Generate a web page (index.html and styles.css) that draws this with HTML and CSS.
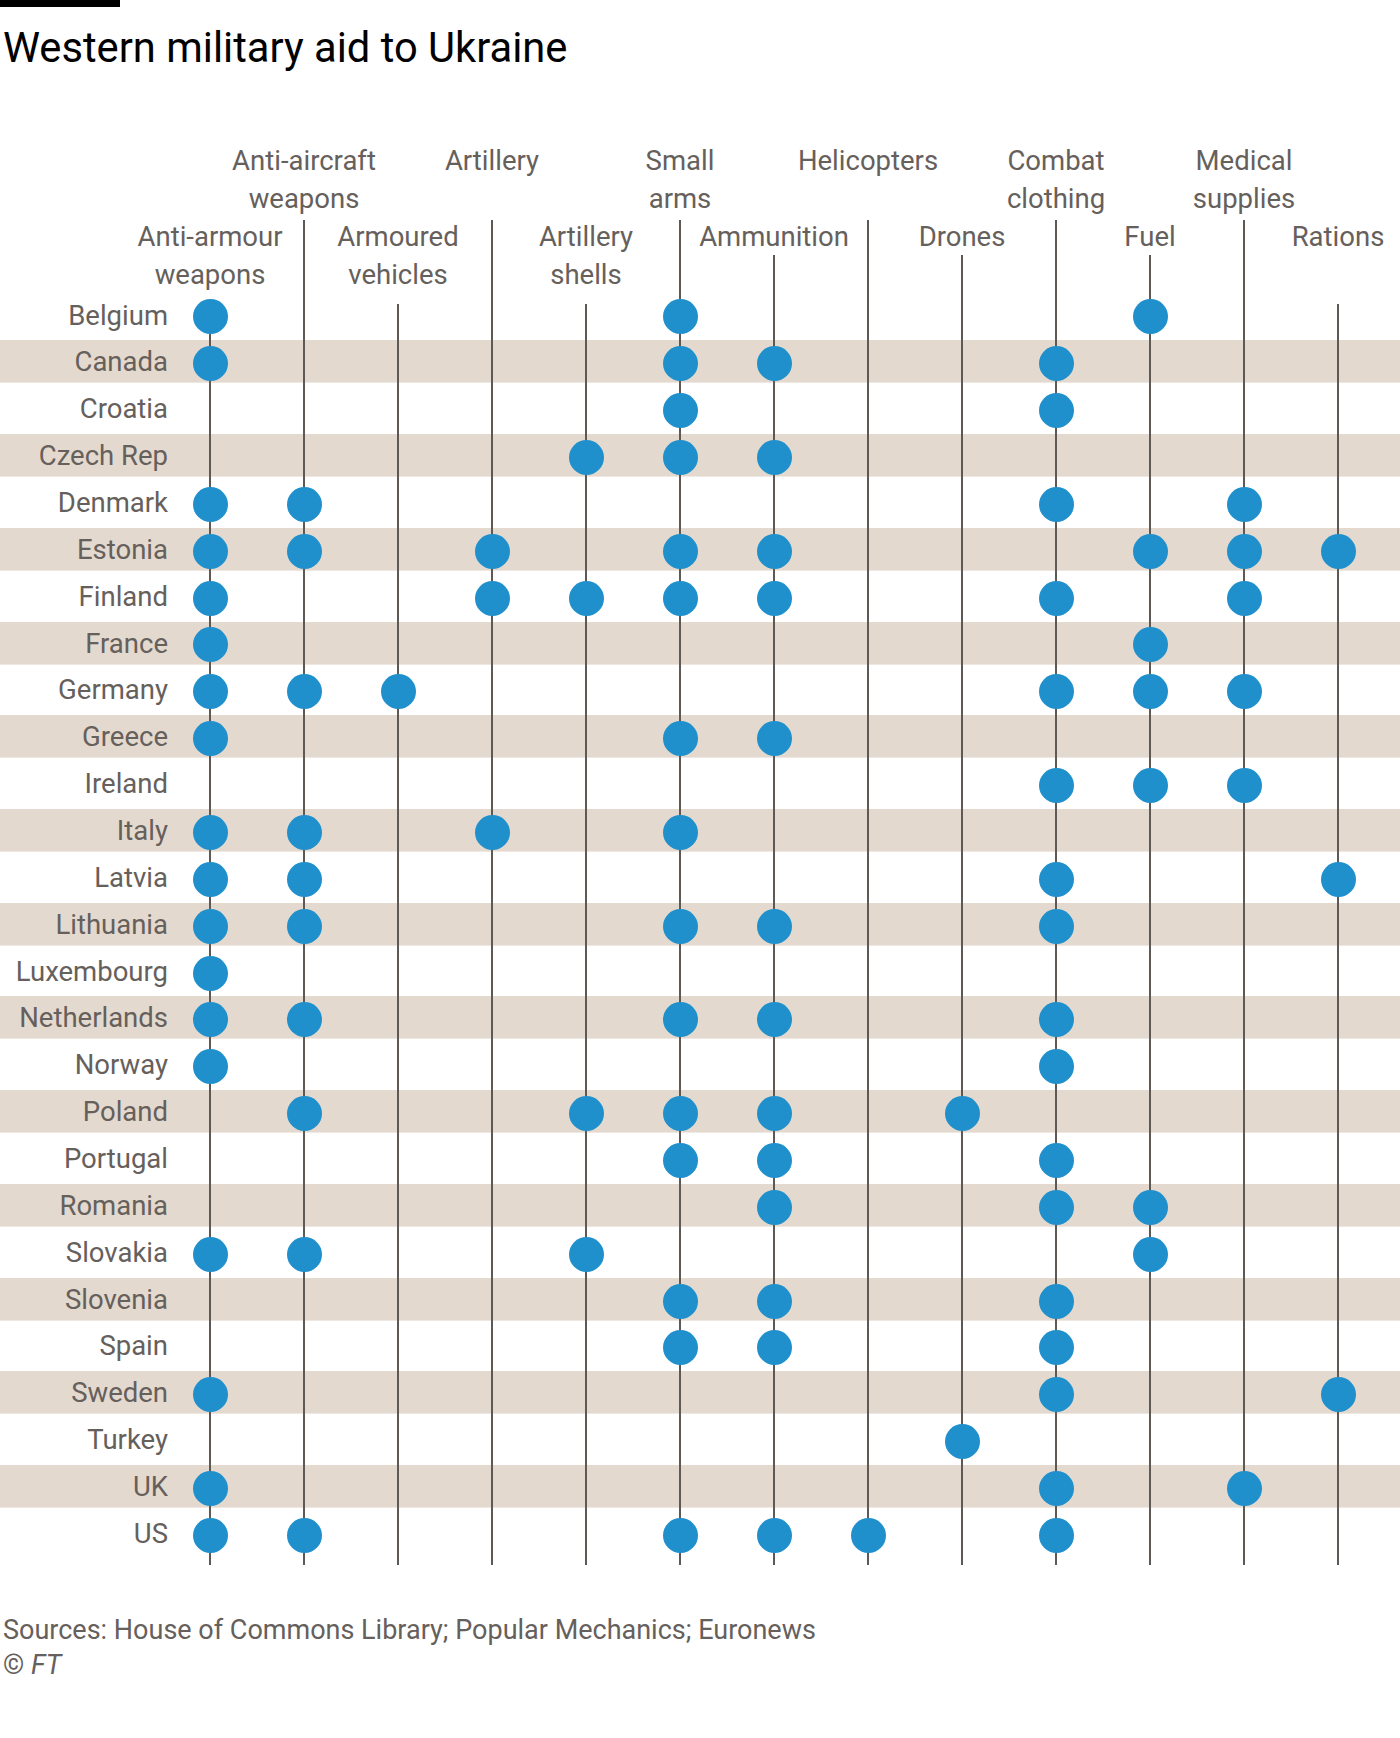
FILE: index.html
```html
<!DOCTYPE html>
<html lang="en">
<head>
<meta charset="utf-8">
<title>Western military aid to Ukraine</title>
<link rel="stylesheet" href="styles.css">
</head>
<body>
<div class="bar"></div>
<h1 class="title">Western military aid to Ukraine</h1>
<div class="chart">
  <div class="head">
    <div class="hcol low two"><div class="hlabel"><span>Anti-armour</span><span>weapons</span></div></div>
    <div class="hcol up"><div class="hlabel"><span>Anti-aircraft</span><span>weapons</span></div><div class="hline"></div></div>
    <div class="hcol low two"><div class="hlabel"><span>Armoured</span><span>vehicles</span></div></div>
    <div class="hcol up"><div class="hlabel"><span>Artillery</span><span>&nbsp;</span></div><div class="hline"></div></div>
    <div class="hcol low two"><div class="hlabel"><span>Artillery</span><span>shells</span></div></div>
    <div class="hcol up"><div class="hlabel"><span>Small</span><span>arms</span></div><div class="hline"></div></div>
    <div class="hcol low"><div class="hlabel"><span>Ammunition</span></div><div class="hline"></div></div>
    <div class="hcol up"><div class="hlabel"><span>Helicopters</span><span>&nbsp;</span></div><div class="hline"></div></div>
    <div class="hcol low"><div class="hlabel"><span>Drones</span></div><div class="hline"></div></div>
    <div class="hcol up"><div class="hlabel"><span>Combat</span><span>clothing</span></div><div class="hline"></div></div>
    <div class="hcol low"><div class="hlabel"><span>Fuel</span></div><div class="hline"></div></div>
    <div class="hcol up"><div class="hlabel"><span>Medical</span><span>supplies</span></div><div class="hline"></div></div>
    <div class="hcol low"><div class="hlabel"><span>Rations</span></div></div>
  </div>

  <div class="row"><span class="name">Belgium</span><i class="c on late"></i><i class="c"></i><i class="c late"></i><i class="c"></i><i class="c late"></i><i class="c on"></i><i class="c"></i><i class="c"></i><i class="c"></i><i class="c"></i><i class="c on"></i><i class="c"></i><i class="c late"></i></div>
  <div class="row alt"><span class="name">Canada</span><i class="c on"></i><i class="c"></i><i class="c"></i><i class="c"></i><i class="c"></i><i class="c on"></i><i class="c on"></i><i class="c"></i><i class="c"></i><i class="c on"></i><i class="c"></i><i class="c"></i><i class="c"></i></div>
  <div class="row"><span class="name">Croatia</span><i class="c"></i><i class="c"></i><i class="c"></i><i class="c"></i><i class="c"></i><i class="c on"></i><i class="c"></i><i class="c"></i><i class="c"></i><i class="c on"></i><i class="c"></i><i class="c"></i><i class="c"></i></div>
  <div class="row alt"><span class="name">Czech Rep</span><i class="c"></i><i class="c"></i><i class="c"></i><i class="c"></i><i class="c on"></i><i class="c on"></i><i class="c on"></i><i class="c"></i><i class="c"></i><i class="c"></i><i class="c"></i><i class="c"></i><i class="c"></i></div>
  <div class="row"><span class="name">Denmark</span><i class="c on"></i><i class="c on"></i><i class="c"></i><i class="c"></i><i class="c"></i><i class="c"></i><i class="c"></i><i class="c"></i><i class="c"></i><i class="c on"></i><i class="c"></i><i class="c on"></i><i class="c"></i></div>
  <div class="row alt"><span class="name">Estonia</span><i class="c on"></i><i class="c on"></i><i class="c"></i><i class="c on"></i><i class="c"></i><i class="c on"></i><i class="c on"></i><i class="c"></i><i class="c"></i><i class="c"></i><i class="c on"></i><i class="c on"></i><i class="c on"></i></div>
  <div class="row"><span class="name">Finland</span><i class="c on"></i><i class="c"></i><i class="c"></i><i class="c on"></i><i class="c on"></i><i class="c on"></i><i class="c on"></i><i class="c"></i><i class="c"></i><i class="c on"></i><i class="c"></i><i class="c on"></i><i class="c"></i></div>
  <div class="row alt"><span class="name">France</span><i class="c on"></i><i class="c"></i><i class="c"></i><i class="c"></i><i class="c"></i><i class="c"></i><i class="c"></i><i class="c"></i><i class="c"></i><i class="c"></i><i class="c on"></i><i class="c"></i><i class="c"></i></div>
  <div class="row"><span class="name">Germany</span><i class="c on"></i><i class="c on"></i><i class="c on"></i><i class="c"></i><i class="c"></i><i class="c"></i><i class="c"></i><i class="c"></i><i class="c"></i><i class="c on"></i><i class="c on"></i><i class="c on"></i><i class="c"></i></div>
  <div class="row alt"><span class="name">Greece</span><i class="c on"></i><i class="c"></i><i class="c"></i><i class="c"></i><i class="c"></i><i class="c on"></i><i class="c on"></i><i class="c"></i><i class="c"></i><i class="c"></i><i class="c"></i><i class="c"></i><i class="c"></i></div>
  <div class="row"><span class="name">Ireland</span><i class="c"></i><i class="c"></i><i class="c"></i><i class="c"></i><i class="c"></i><i class="c"></i><i class="c"></i><i class="c"></i><i class="c"></i><i class="c on"></i><i class="c on"></i><i class="c on"></i><i class="c"></i></div>
  <div class="row alt"><span class="name">Italy</span><i class="c on"></i><i class="c on"></i><i class="c"></i><i class="c on"></i><i class="c"></i><i class="c on"></i><i class="c"></i><i class="c"></i><i class="c"></i><i class="c"></i><i class="c"></i><i class="c"></i><i class="c"></i></div>
  <div class="row"><span class="name">Latvia</span><i class="c on"></i><i class="c on"></i><i class="c"></i><i class="c"></i><i class="c"></i><i class="c"></i><i class="c"></i><i class="c"></i><i class="c"></i><i class="c on"></i><i class="c"></i><i class="c"></i><i class="c on"></i></div>
  <div class="row alt"><span class="name">Lithuania</span><i class="c on"></i><i class="c on"></i><i class="c"></i><i class="c"></i><i class="c"></i><i class="c on"></i><i class="c on"></i><i class="c"></i><i class="c"></i><i class="c on"></i><i class="c"></i><i class="c"></i><i class="c"></i></div>
  <div class="row"><span class="name">Luxembourg</span><i class="c on"></i><i class="c"></i><i class="c"></i><i class="c"></i><i class="c"></i><i class="c"></i><i class="c"></i><i class="c"></i><i class="c"></i><i class="c"></i><i class="c"></i><i class="c"></i><i class="c"></i></div>
  <div class="row alt"><span class="name">Netherlands</span><i class="c on"></i><i class="c on"></i><i class="c"></i><i class="c"></i><i class="c"></i><i class="c on"></i><i class="c on"></i><i class="c"></i><i class="c"></i><i class="c on"></i><i class="c"></i><i class="c"></i><i class="c"></i></div>
  <div class="row"><span class="name">Norway</span><i class="c on"></i><i class="c"></i><i class="c"></i><i class="c"></i><i class="c"></i><i class="c"></i><i class="c"></i><i class="c"></i><i class="c"></i><i class="c on"></i><i class="c"></i><i class="c"></i><i class="c"></i></div>
  <div class="row alt"><span class="name">Poland</span><i class="c"></i><i class="c on"></i><i class="c"></i><i class="c"></i><i class="c on"></i><i class="c on"></i><i class="c on"></i><i class="c"></i><i class="c on"></i><i class="c"></i><i class="c"></i><i class="c"></i><i class="c"></i></div>
  <div class="row"><span class="name">Portugal</span><i class="c"></i><i class="c"></i><i class="c"></i><i class="c"></i><i class="c"></i><i class="c on"></i><i class="c on"></i><i class="c"></i><i class="c"></i><i class="c on"></i><i class="c"></i><i class="c"></i><i class="c"></i></div>
  <div class="row alt"><span class="name">Romania</span><i class="c"></i><i class="c"></i><i class="c"></i><i class="c"></i><i class="c"></i><i class="c"></i><i class="c on"></i><i class="c"></i><i class="c"></i><i class="c on"></i><i class="c on"></i><i class="c"></i><i class="c"></i></div>
  <div class="row"><span class="name">Slovakia</span><i class="c on"></i><i class="c on"></i><i class="c"></i><i class="c"></i><i class="c on"></i><i class="c"></i><i class="c"></i><i class="c"></i><i class="c"></i><i class="c"></i><i class="c on"></i><i class="c"></i><i class="c"></i></div>
  <div class="row alt"><span class="name">Slovenia</span><i class="c"></i><i class="c"></i><i class="c"></i><i class="c"></i><i class="c"></i><i class="c on"></i><i class="c on"></i><i class="c"></i><i class="c"></i><i class="c on"></i><i class="c"></i><i class="c"></i><i class="c"></i></div>
  <div class="row"><span class="name">Spain</span><i class="c"></i><i class="c"></i><i class="c"></i><i class="c"></i><i class="c"></i><i class="c on"></i><i class="c on"></i><i class="c"></i><i class="c"></i><i class="c on"></i><i class="c"></i><i class="c"></i><i class="c"></i></div>
  <div class="row alt"><span class="name">Sweden</span><i class="c on"></i><i class="c"></i><i class="c"></i><i class="c"></i><i class="c"></i><i class="c"></i><i class="c"></i><i class="c"></i><i class="c"></i><i class="c on"></i><i class="c"></i><i class="c"></i><i class="c on"></i></div>
  <div class="row"><span class="name">Turkey</span><i class="c"></i><i class="c"></i><i class="c"></i><i class="c"></i><i class="c"></i><i class="c"></i><i class="c"></i><i class="c"></i><i class="c on"></i><i class="c"></i><i class="c"></i><i class="c"></i><i class="c"></i></div>
  <div class="row alt"><span class="name">UK</span><i class="c on"></i><i class="c"></i><i class="c"></i><i class="c"></i><i class="c"></i><i class="c"></i><i class="c"></i><i class="c"></i><i class="c"></i><i class="c on"></i><i class="c"></i><i class="c on"></i><i class="c"></i></div>
  <div class="row"><span class="name">US</span><i class="c on"></i><i class="c on"></i><i class="c"></i><i class="c"></i><i class="c"></i><i class="c on"></i><i class="c on"></i><i class="c on"></i><i class="c"></i><i class="c on"></i><i class="c"></i><i class="c"></i><i class="c"></i></div>

  <div class="tail"><i class="c"></i><i class="c"></i><i class="c"></i><i class="c"></i><i class="c"></i><i class="c"></i><i class="c"></i><i class="c"></i><i class="c"></i><i class="c"></i><i class="c"></i><i class="c"></i><i class="c"></i></div>
</div>
<div class="source">
  <p class="source-line">Sources: House of Commons Library; Popular Mechanics; Euronews</p>
  <p class="source-line">© <em class="ft">FT</em></p>
</div>
</body>
</html>
```
FILE: styles.css
```css
* { box-sizing: border-box; }

body {
  margin: 0;
  background: #ffffff;
  color: #66605c;
  font-family: Roboto, "Liberation Sans", sans-serif;
}

.bar {
  width: 120px;
  height: 7px;
  background: #000000;
}

.title {
  margin: 16.2px 0 0 3px;
  font-size: 41.7px;
  line-height: 50px;
  font-weight: 400;
  color: #000000;
}

.chart {
  margin-top: 68.9px;
}

.head {
  display: flex;
  height: 151.5px;
  padding-left: 163px;
}

.hcol {
  flex: 0 0 94px;
  width: 94px;
  min-width: 0;
  display: flex;
  flex-direction: column;
  align-items: center;
}

.hlabel {
  display: flex;
  flex-direction: column;
  align-items: center;
  font-size: 27.5px;
  line-height: 38px;
  white-space: nowrap;
}

.low .hlabel {
  margin-top: 76px;
}

.hline {
  flex: 1;
  width: 2px;
  margin-top: 1.9px;
  background: #5f5955;
}

.low .hline {
  margin-top: -1.1px;
}

.row {
  display: flex;
  height: 46.87px;
}

.row.alt {
  background: linear-gradient(#e4d9ce, #e4d9ce) 0 0 / 100% 42.6px no-repeat;
}

.name {
  flex: 0 0 168px;
  margin-right: -5px;
  text-align: right;
  font-size: 27.5px;
  line-height: 43px;
  white-space: nowrap;
}

.c {
  flex: 0 0 94px;
  min-width: 0;
  display: flex;
  justify-content: center;
  align-items: flex-start;
  background: linear-gradient(#5f5955, #5f5955) 50% 0 / 2px 100% no-repeat;
}

.c.late {
  background-position: 50% 100%;
  background-size: 2px calc(100% - 9.4px);
}

.c.on::after {
  content: "";
  flex: 0 0 35px;
  width: 35px;
  height: 35px;
  margin-top: 5.9px;
  border-radius: 50%;
  background: #2090cd;
}

.tail {
  display: flex;
  height: 5.9px;
  padding-left: 163px;
}

.source {
  margin: 48.3px 0 0 3px;
  font-size: 27px;
  line-height: 35px;
}

.source-line {
  margin: 0;
}

.ft {
  font-style: italic;
}
```
